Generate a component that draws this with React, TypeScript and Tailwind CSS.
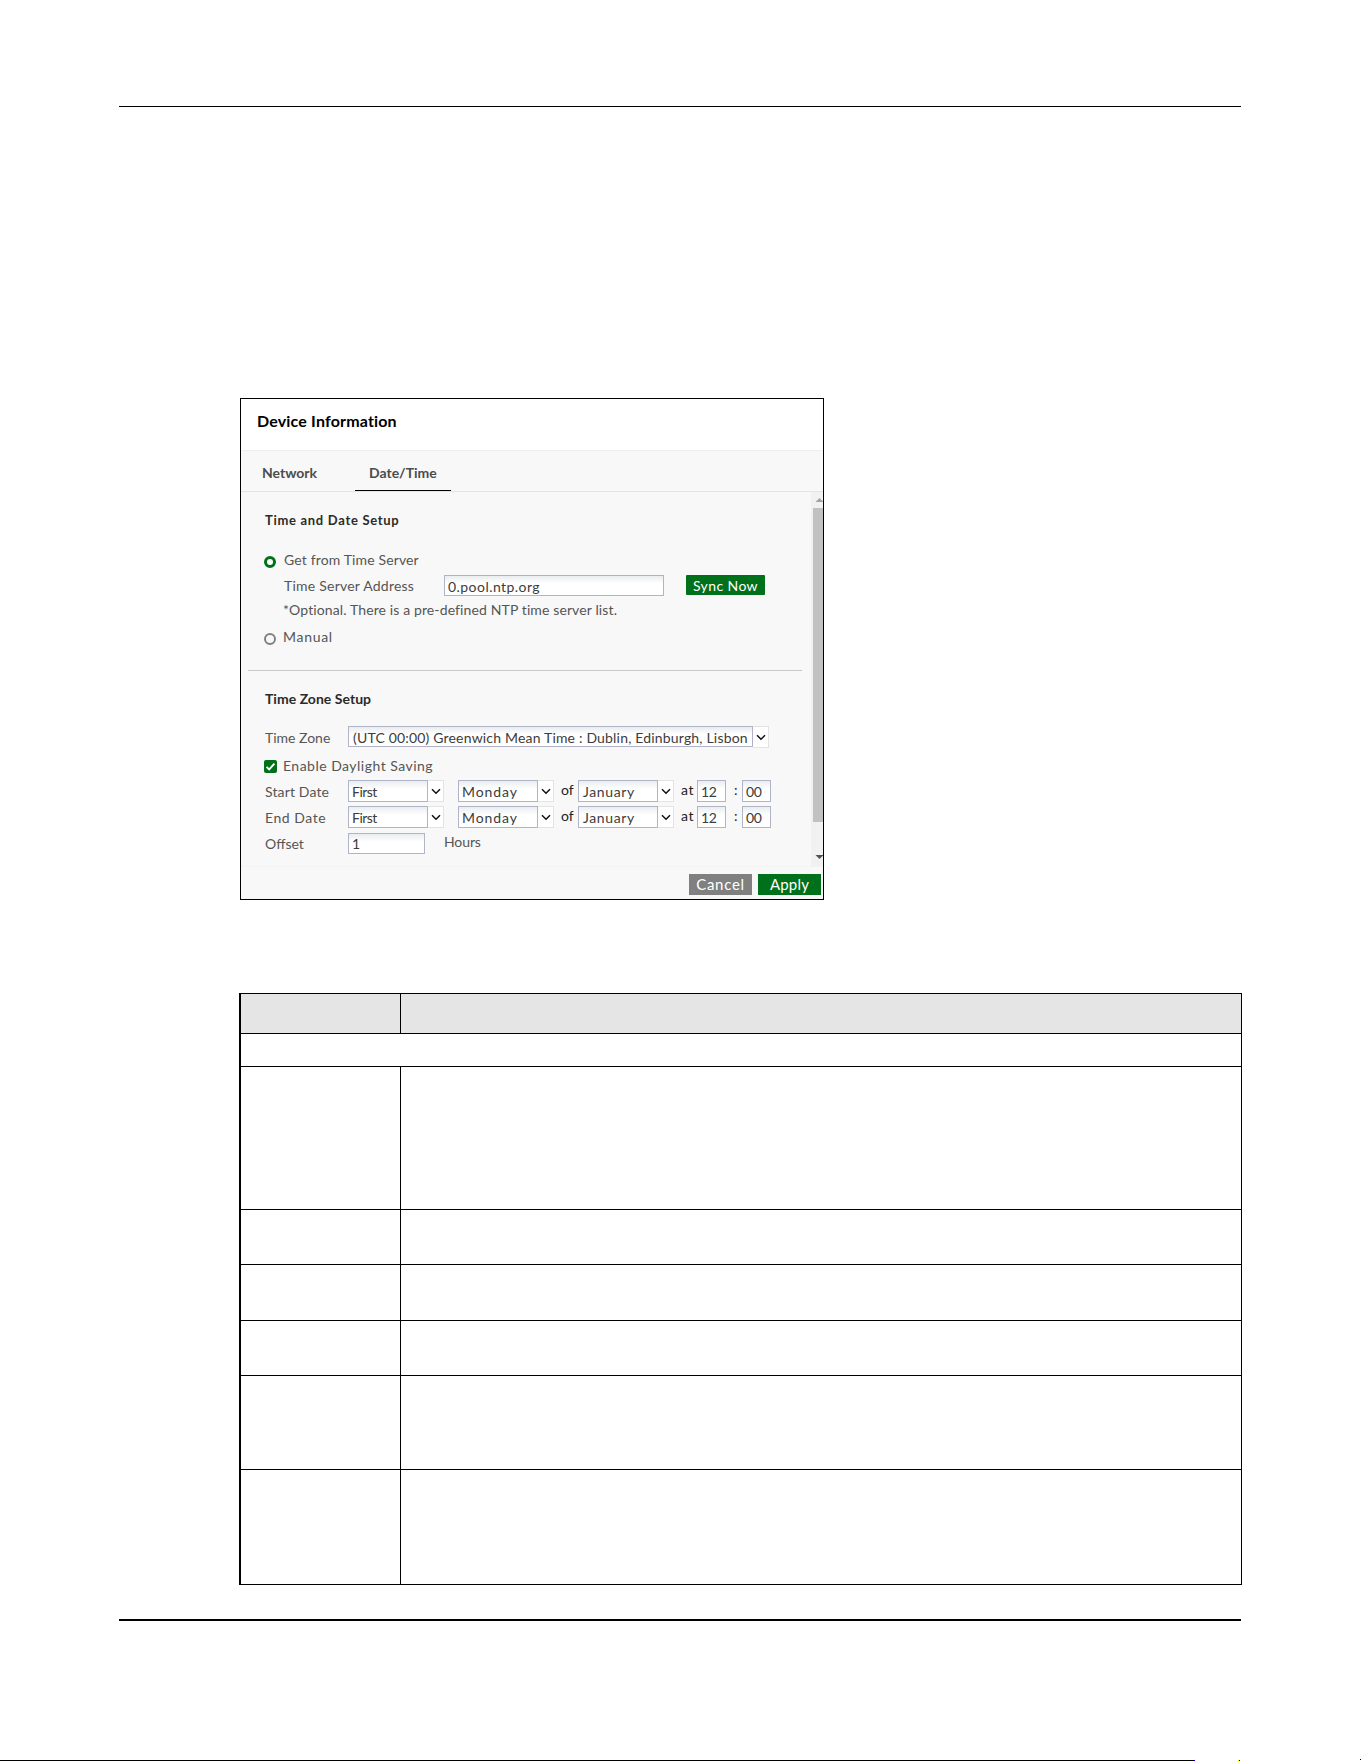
import React from 'react';

const ArrowBox = () => (
    <div className="w-4 h-full bg-white border-t border-r border-b border-[#e3e3e3] flex items-center justify-center">
        <svg width="10" height="7" viewBox="0 0 10 7" fill="none" stroke="#111" strokeWidth="1.5">
            <path d="M1 1.3 L5 5.3 L9 1.3" />
        </svg>
    </div>
);

interface FieldProps {
    value: string;
    className?: string;
}

const Field = ({ value, className = '' }: FieldProps) => (
    <div className={`shrink-0 border border-[#b1b3c9] bg-linear-to-b from-[#e9edee] to-white to-40% text-[#3c3c3c] whitespace-nowrap overflow-hidden ${className}`}>
        {value}
    </div>
);

const Select = ({ value, className = '' }: FieldProps) => (
    <div className="flex h-[22px] shrink-0">
        <Field value={value} className={`w-20 h-[22px] leading-[21px] ${className}`} />
        <ArrowBox />
    </div>
);

const Radio = ({ checked }: { checked?: boolean }) => (
    <div className={`w-3 h-3 mt-1.5 shrink-0 rounded-full ${checked ? 'border-[3.5px] border-[#00701a] bg-white' : 'border-2 border-[#808080] bg-[#f8f8f8]'}`} />
);

interface DateRowProps {
    label: string;
    labelClass: string;
}

const DateRow = ({ label, labelClass }: DateRowProps) => (
    <div className="flex h-[22px] mt-1 ml-6">
        <div className={`w-[83px] pt-0.5 shrink-0 ${labelClass}`}>{label}</div>
        <Select value="First" className="pl-[3px] tracking-[-0.5px]" />
        <div className="w-3.5 shrink-0" />
        <Select value="Monday" className="pl-[3px] tracking-[0.9px]" />
        <div className="w-6 pl-[7px] shrink-0 text-[#222]">of</div>
        <Select value="January" className="pl-1 tracking-[0.64px]" />
        <div className="w-[23px] pl-[7px] shrink-0 text-[#222] tracking-[0.7px]">at</div>
        <Field value="12" className="w-[29px] h-[22px] pl-[3px] leading-[21px] tracking-[-0.3px]" />
        <div className="w-4 pl-2 shrink-0 text-[#222]">:</div>
        <Field value="00" className="w-[29px] h-[22px] pl-[3px] leading-[21px] tracking-[-0.4px]" />
    </div>
);

const DeviceInformation = () => (
    <div className="w-[584px] h-[502px] ml-60 mt-[291px] border border-black bg-[#f8f8f8] flex flex-col overflow-hidden">
        <div className="h-[51px] shrink-0 bg-white pt-3 pl-4 text-[16px] leading-5 font-bold text-black tracking-[0.17px]">
            Device Information
        </div>

        <div className="h-[42px] shrink-0 flex border-t border-t-[#efefef] border-b border-b-[#e4e4e4] font-bold text-[#4c4c4c]">
            <div className="w-[114px] pl-[21px] pt-3">Network</div>
            <div className="w-24 pl-3.5 pt-3 border-b border-black">Date/Time</div>
        </div>

        <div className="h-[374px] shrink-0 flex">
            <div className="w-[570px] shrink-0">
                <div className="mt-[18px] ml-6 text-[13px] font-bold text-[#2b2b2b] tracking-[0.7px]">Time and Date Setup</div>
                <div className="flex mt-5 ml-[23px]">
                    <Radio checked />
                    <div className="ml-2 tracking-[0.14px]">Get from Time Server</div>
                </div>
                <div className="flex h-[21px] mt-[5px] ml-[43px]">
                    <div className="w-40 pt-px shrink-0 tracking-[0.23px]">Time Server Address</div>
                    <Field value="0.pool.ntp.org" className="w-[220px] h-[21px] pl-[3px] leading-[22px] tracking-[0.45px]" />
                    <div className="w-[79px] h-5 ml-[22px] rounded-[1px] bg-[#00701a] text-center leading-[21px] text-white tracking-[0.4px]">Sync Now</div>
                </div>
                <div className="mt-1 ml-[42px] tracking-[0.12px]">*Optional. There is a pre-defined NTP time server list.</div>
                <div className="flex mt-[7px] ml-[23px]">
                    <Radio />
                    <div className="ml-[7px] tracking-[0.7px]">Manual</div>
                </div>

                <div className="w-[554px] h-px mt-[23px] ml-[7px] bg-[#c9c9c9]" />

                <div className="mt-[18px] ml-6 font-bold text-[#2b2b2b] tracking-[0.03px]">Time Zone Setup</div>
                <div className="flex h-[22px] mt-[17px] ml-6">
                    <div className="w-[83px] pt-0.5 shrink-0">Time Zone</div>
                    <Field
                        value="(UTC 00:00) Greenwich Mean Time : Dublin, Edinburgh, Lisbon"
                        className="w-[405px] h-[21px] pl-1 leading-[21px] tracking-[0.18px]"
                    />
                    <ArrowBox />
                </div>
                <div className="flex mt-2 ml-[23px]">
                    <div className="w-[13px] h-[13px] mt-1 rounded-[2px] bg-[#00701a]">
                        <svg width="13" height="13" viewBox="0 0 13 13" fill="none" stroke="#fff" strokeWidth="1.8">
                            <path d="M2.5 6.8 L5.2 9.4 L10.4 3.6" />
                        </svg>
                    </div>
                    <div className="ml-1.5 tracking-[0.48px]">Enable Daylight Saving</div>
                </div>
                <DateRow label="Start Date" labelClass="tracking-[0.15px]" />
                <DateRow label="End Date" labelClass="tracking-[0.55px]" />
                <div className="flex h-[21px] mt-[5px] ml-6">
                    <div className="w-[83px] pt-px shrink-0">Offset</div>
                    <Field value="1" className="w-[77px] h-[21px] pl-[3px] leading-[20px]" />
                    <div className="ml-[19px] mt-[-1px] tracking-[-0.1px]">Hours</div>
                </div>
            </div>

            <div className="w-3 pl-0.5 shrink-0 bg-[#f1f1f1] flex flex-col overflow-hidden">
                <svg width="10" height="16" viewBox="0 0 10 16" fill="#a3a3a3">
                    <path d="M2.5 10 L6.5 6 L10.5 10 Z" />
                </svg>
                <div className="h-[314px] bg-[#c1c1c1]" />
                <svg width="10" height="44" viewBox="0 0 10 44" fill="#505050">
                    <path d="M2.5 33 L6.5 37 L10.5 33 Z" />
                </svg>
            </div>
        </div>

        <div className="flex-1 flex justify-end pt-[7px] pr-0.5 border-t border-[#f3f3f3] text-white">
            <div className="w-[63px] h-[21px] bg-[#808080] text-center text-[15px] leading-[21px] tracking-[0.7px]">Cancel</div>
            <div className="w-[63px] h-[21px] ml-1.5 bg-[#00701a] text-center text-[15px] leading-[21px] tracking-[0.2px]">Apply</div>
        </div>
    </div>
);

const rowHeights = ['h-[143px]', 'h-[55px]', 'h-[56px]', 'h-[55px]', 'h-[94px]', 'h-[115px]'];

const FieldTable = () => (
    <div className="w-[1003px] ml-[239px] mt-[93px] border-t border-r border-l-2 border-black">
        <div className="h-10 border-b border-black bg-[#e5e5e5] flex">
            <div className="w-40 border-r border-black" />
        </div>
        <div className="h-[33px] border-b border-black" />
        {rowHeights.map((h, i) => (
            <div key={i} className={`${h} border-b border-black flex`}>
                <div className="w-40 border-r border-black" />
            </div>
        ))}
    </div>
);

export default function App() {
    return (
        <div className="w-[1361px] h-[1761px] bg-white flex flex-col overflow-hidden font-['Lato',sans-serif] text-[14px] leading-5 text-[#555]">
            <div className="w-[1122px] h-px mt-[106px] ml-[119px] shrink-0 bg-black" />
            <DeviceInformation />
            <FieldTable />
            <div className="w-[1122px] h-0.5 mt-[34px] ml-[119px] shrink-0 bg-black" />
            <div className="mt-auto flex items-end">
                <div className="w-[1194px] h-px bg-black" />
                <div className="w-px h-px bg-[#0000ff]" />
                <div className="w-px h-px ml-[43px] bg-[#ffff00]" />
                <div className="w-px h-px bg-black" />
                <div className="w-px h-px ml-[120px] mb-px bg-black" />
            </div>
        </div>
    );
}
